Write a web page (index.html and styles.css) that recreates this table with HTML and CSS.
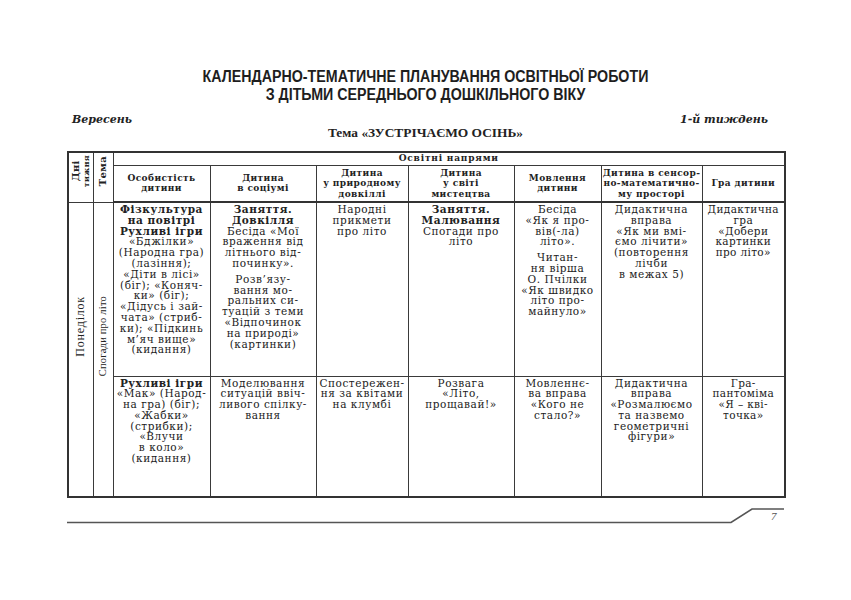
FILE: index.html
```html
<!DOCTYPE html>
<html lang="uk">
<head>
<meta charset="utf-8">
<title>Календарно-тематичне планування</title>
<link rel="stylesheet" href="styles.css">
</head>
<body>
<div class="page">
  <h1 class="title">КАЛЕНДАРНО-ТЕМАТИЧНЕ ПЛАНУВАННЯ ОСВІТНЬОЇ РОБОТИ<br>З ДІТЬМИ СЕРЕДНЬОГО ДОШКІЛЬНОГО ВІКУ</h1>
  <div class="meta"><span>Вересень</span><span>1-й тиждень</span></div>
  <div class="theme">Тема «ЗУСТРІЧАЄМО ОСІНЬ»</div>
  <table class="plan">
    <colgroup>
      <col class="c-day"><col class="c-topic"><col class="c-a"><col class="c-b"><col class="c-c"><col class="c-d"><col class="c-e"><col class="c-f"><col class="c-g">
    </colgroup>
    <thead>
      <tr class="r-top">
        <th rowspan="2" class="vert-cell vh"><div class="vert"><b>Дні</b><br><span class="small">тижня</span></div></th>
        <th rowspan="2" class="vert-cell vh"><div class="vert">Тема</div></th>
        <th colspan="7" class="span-head">Освітні напрями</th>
      </tr>
      <tr class="r-head">
        <th>Особистість<br>дитини</th>
        <th>Дитина<br>в соціумі</th>
        <th>Дитина<br>у природному<br>довкіллі</th>
        <th>Дитина<br>у світі<br>мистецтва</th>
        <th>Мовлення<br>дитини</th>
        <th>Дитина в сенсор-<br>но-математично-<br>му просторі</th>
        <th>Гра дитини</th>
      </tr>
    </thead>
    <tbody>
      <tr class="r-one">
        <td rowspan="2" class="vert-cell day"><div class="vert">Понеділок</div></td>
        <td rowspan="2" class="vert-cell topic"><div class="vert">Спогади про літо</div></td>
        <td><b>Фізкультура<br>на повітрі<br>Рухливі ігри</b><br>«Бджілки»<br>(Народна гра)<br>(лазіння);<br>«Діти в лісі»<br>(біг); «Коняч-<br>ки» (біг);<br>«Дідусь і зай-<br>чата» (стриб-<br>ки); «Підкинь<br>м’яч вище»<br>(кидання)</td>
        <td><p><b>Заняття.<br>Довкілля</b><br>Бесіда «Мої<br>враження від<br>літнього від-<br>починку».</p><p class="gap">Розв’язу-<br>вання мо-<br>ральних си-<br>туацій з теми<br>«Відпочинок<br>на природі»<br>(картинки)</p></td>
        <td>Народні<br>прикмети<br>про літо</td>
        <td><b>Заняття.<br>Малювання</b><br>Спогади про<br>літо</td>
        <td><p>Бесіда<br>«Як я про-<br>вів(-ла)<br>літо».</p><p class="gap">Читан-<br>ня вірша<br>О. Пчілки<br>«Як швидко<br>літо про-<br>майнуло»</p></td>
        <td>Дидактична<br>вправа<br>«Як ми вмі-<br>ємо лічити»<br>(повторення<br>лічби<br>в межах 5)</td>
        <td class="last">Дидактична<br>гра<br>«Добери<br>картинки<br>про літо»</td>
      </tr>
      <tr class="r-two">
        <td><b>Рухливі ігри</b><br>«Мак» (Народ-<br>на гра) (біг);<br>«Жабки»<br>(стрибки);<br>«Влучи<br>в коло»<br>(кидання)</td>
        <td>Моделювання<br>ситуацій ввіч-<br>ливого спілку-<br>вання</td>
        <td>Спостережен-<br>ня за квітами<br>на клумбі</td>
        <td>Розвага<br>«Літо,<br>прощавай!»</td>
        <td>Мовленнє-<br>ва вправа<br>«Кого не<br>стало?»</td>
        <td>Дидактична<br>вправа<br>«Розмалюємо<br>та назвемо<br>геометричні<br>фігури»</td>
        <td class="last">Гра-<br>пантоміма<br>«Я – кві-<br>точка»</td>
      </tr>
    </tbody>
  </table>
  <footer class="foot">
    <svg class="foot-line" width="717" height="18" viewBox="0 0 717 18">
      <path d="M0 15.5 H664 L685 2 H717" fill="none" stroke="#555" stroke-width="1.6"/>
    </svg>
    <span class="page-no">7</span>
  </footer>
</div>
</body>
</html>
```

FILE: styles.css
```css
html, body {
  margin: 0;
  padding: 0;
  background: #ffffff;
}

.page {
  width: 717px;
  margin-left: 67px;
  padding-top: 68px;
  color: #222;
  font-family: "DejaVu Serif", serif;
}

.title {
  margin: 0;
  font-family: "Liberation Sans", "Arial", sans-serif;
  font-weight: bold;
  font-size: 16px;
  line-height: 18px;
  text-align: center;
  color: #1e1e1e;
  transform: scaleX(0.89);
}

.meta {
  display: flex;
  justify-content: space-between;
  margin-top: 9px;
  padding: 0 16px 0 5px;
  font-family: "DejaVu Serif", serif;
  font-style: italic;
  font-weight: bold;
  font-size: 11px;
  line-height: 13px;
}

.theme {
  text-align: center;
  font-family: "Liberation Serif", serif;
  font-weight: bold;
  font-size: 13.4px;
  line-height: 14px;
  margin-bottom: 11px;
}

.plan {
  width: 717px;
  table-layout: fixed;
  border-collapse: collapse;
  border: 2px solid #333;
  font-size: 10.5px;
  line-height: 10.8px;
}

.c-day { width: 25px; }
.c-topic { width: 20px; }
.c-a { width: 97px; }
.c-b { width: 106px; }
.c-c { width: 92px; }
.c-d { width: 106px; }
.c-e { width: 87px; }
.c-f { width: 101px; }
.c-g { width: 83px; }

.plan th,
.plan td {
  border: 1px solid #3a3a3a;
  padding: 1px 0;
  text-align: center;
  overflow: hidden;
  white-space: nowrap;
}

.plan th {
  font-weight: bold;
  font-size: 9px;
  letter-spacing: 0.4px;
  line-height: 10.5px;
  vertical-align: middle;
}

.plan td {
  vertical-align: top;
  font-weight: normal;
  letter-spacing: 0.55px;
}

.plan td.last { letter-spacing: 0.35px; }

.plan p { margin: 0; }
.plan p.gap { margin-top: 5px; }

.r-top { height: 13px; }
.plan .r-top .span-head { padding: 0; line-height: 11px; letter-spacing: 0.8px; }
.r-head { height: 37px; }
.plan .r-head th { border-bottom: 2px solid #333; }
.r-one { height: 174px; }
.r-two { height: 121px; }
.plan .r-two td { border-top: 1.5px solid #333; }

.plan .vert-cell {
  vertical-align: middle;
  padding: 0;
}

.vert {
  display: inline-block;
  writing-mode: vertical-rl;
  transform: rotate(180deg);
  white-space: nowrap;
  text-align: center;
}

.plan .vh { padding-bottom: 10px; }
.vh .vert {
  font-size: 10px;
  line-height: 9.5px;
  letter-spacing: 0.3px;
}
.vert .small { font-size: 8px; font-weight: bold; }

.plan .day { padding-bottom: 44px; }
.plan .topic { padding-bottom: 24px; }

.day .vert {
  font-family: "Liberation Serif", serif;
  font-size: 12px;
  letter-spacing: 0.8px;
}

.topic .vert {
  font-family: "Liberation Serif", serif;
  font-size: 10.5px;
  letter-spacing: 0.2px;
}

.foot {
  position: relative;
  margin-top: 9px;
  height: 20px;
}

.foot-line { display: block; }

.page-no {
  position: absolute;
  left: 704px;
  top: 3px;
  font-family: "Liberation Serif", serif;
  font-style: italic;
  font-size: 11px;
  color: #555;
}
```
